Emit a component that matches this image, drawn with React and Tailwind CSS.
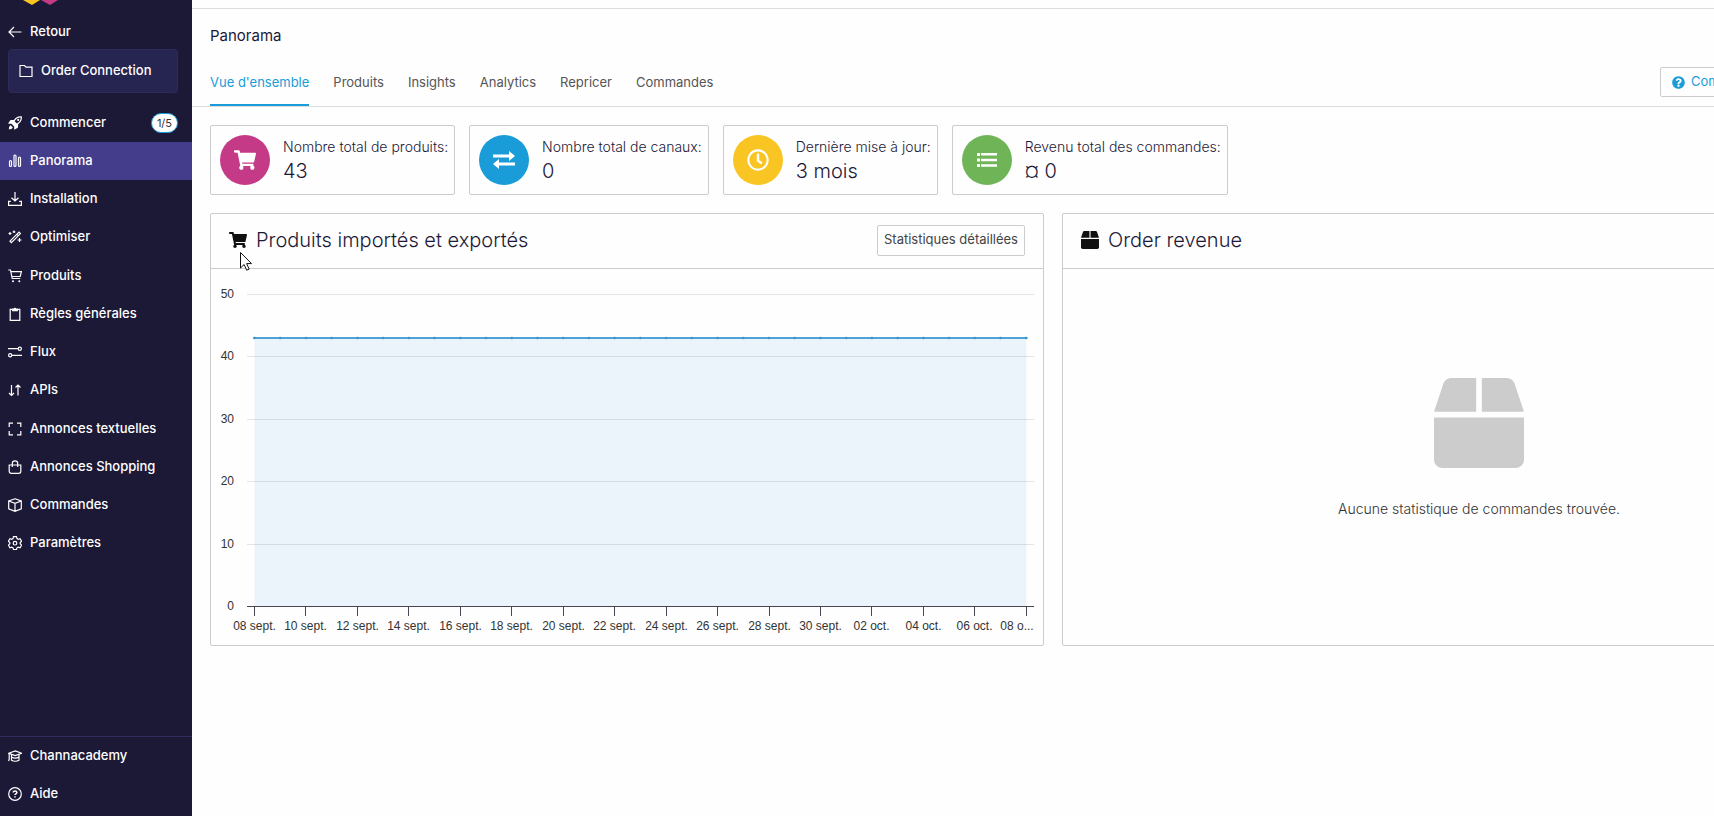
import React from "react";
import { FaBox, FaShoppingCart, FaRegClock, FaQuestionCircle } from "react-icons/fa";

const icons = {
  back: <path d="M13.5 7H1M6 2 1 7l5 5" />,
  folder: <path d="M1 1.500h4.500l1.500 1.700h6v9.300H1z" />,
  rocket: (
    <g fill="currentColor" stroke="none">
      <path
        fillRule="evenodd"
        d="M13.8.3C10.700-.3 8 .7 5.900 3.900H3.200C2.700 3.900 2.300 4.100 2 4.600L.1 7.800h3.300L6.200 10.600v3.200l3.200-1.900c.5-.3.7-.7.700-1.200V8.200c3.200-2.200 4.200-4.900 3.700-7.900zM12.700 1.400c.1 2.300-1 4.500-3.800 6.200L6.600 5.200C8.200 2.300 10.400 1.300 12.700 1.400z"
      />
      <circle cx="10.200" cy="3.900" r="1.100" />
      <path d="M2.600 9.300c-1.200.5-1.700 2-1.700 3.900 1.800 0 3.400-.5 3.900-1.800z" />
    </g>
  ),
  chart: (
    <>
      <rect x="1.500" y="6.500" width="2" height="6" rx="1" />
      <rect x="6" y="1" width="2" height="11.500" rx="1" />
      <rect x="10.500" y="3" width="2" height="9.500" rx="1" />
    </>
  ),
  download: <path d="M7 0v9M3.500 5.700 7 9l3.500-3.300M2.800 9.300H.6v4h12.800v-4h-2.200" />,
  wand: (
    <>
      <path d="M2 11.200 11 2.200l1.400 1.400-9 9zM8.900 4.300l1.400 1.400" />
      <path d="M2 2v3M.5 3.500h3M6 .5v2.600M4.700 1.800h2.600M11.500 8v4M9.500 10h4" />
    </>
  ),
  cart: (
    <>
      <path d="M.3 1h2.200l1.700 8.500h8M2.900 2.700h10.500l-1.200 4.800H4" />
      <circle cx="5" cy="12.300" r="1" fill="currentColor" stroke="none" />
      <circle cx="11.300" cy="12.300" r="1" fill="currentColor" stroke="none" />
    </>
  ),
  clipboard: (
    <>
      <path d="M4.500 2.300H2.200v11h9.600v-11H9.500" />
      <path d="M4.700 3.600V2h1.400a1 1 0 0 1 1.800 0h1.400v1.600z" fill="currentColor" />
    </>
  ),
  flux: (
    <>
      <path d="M0 3.700h10M4 10.300h10" />
      <circle cx="11.800" cy="3.700" r="1.600" />
      <circle cx="2.200" cy="10.300" r="1.600" />
    </>
  ),
  sort: <path d="M3.500 2v10.500M1 10l2.500 2.500L6 10M10 12.500V2M7.500 4.500 10 2l2.500 2.500" />,
  expand: <path d="M1.200 5V1.200H5M9 1.200h3.800V5M12.800 9v3.800H9M5 12.800H1.200V9" />,
  bag: <path d="M1.200 5h11.600v6.300a2 2 0 0 1-2 2H3.200a2 2 0 0 1-2-2zM4.300 7V3.500a2.700 2.700 0 0 1 5.400 0V7" />,
  cube: <path d="M7 .8 13.300 3v7.800L7 13.300.7 10.800V3zM.7 3 7 5.400 13.300 3M7 5.400v7.900" />,
  gear: (
    <>
      <path d="M5.500.7h3l.5 1.900 1.200.7 1.900-.6 1.500 2.600L12.200 6.600v1.200l1.400 1.300-1.500 2.600-1.900-.6-1.200.7-.5 1.700h-3L5 11.800l-1.200-.7-1.900.6L.4 9.100l1.400-1.300V6.600L.4 5.300l1.500-2.600 1.900.6L5 2.600z" />
      <circle cx="7" cy="7.200" r="1.800" />
    </>
  ),
  academy: (
    <>
      <path d="M.7 4.300 7.300 2l6.200 2.300-6.200 2.300zM3.500 5.600v5.600c2 1.300 5.500 1.300 7.500 0V5.600M3.500 8c2 1.200 5.500 1.200 7.500 0" />
      <path d="M1.200 4.800v5.500L.5 12" />
    </>
  ),
  help: (
    <>
      <circle cx="7" cy="7" r="6.300" />
      <path d="M5.200 5.600c0-2.200 3.700-2.100 3.700 0 0 1.300-1.900 1.300-1.900 2.500M7 9.300v1.300" strokeWidth="1.500" />
    </>
  ),
};

function Icon({ name }) {
  return (
    <svg viewBox="0 0 14 14" className="size-[14px] shrink-0" fill="none" stroke="currentColor" strokeWidth="1.200">
      {icons[name]}
    </svg>
  );
}

const menu = [
  [
    { icon: "rocket", label: "Commencer", badge: "1/5" },
    { icon: "chart", label: "Panorama", active: true },
    { icon: "download", label: "Installation" },
    { icon: "wand", label: "Optimiser" },
  ],
  [
    { icon: "cart", label: "Produits" },
    { icon: "clipboard", label: "Règles générales" },
    { icon: "flux", label: "Flux" },
    { icon: "sort", label: "APIs" },
  ],
  [
    { icon: "expand", label: "Annonces textuelles" },
    { icon: "bag", label: "Annonces Shopping" },
    { icon: "cube", label: "Commandes" },
    { icon: "gear", label: "Paramètres" },
  ],
];

const footerMenu = [
  { icon: "academy", label: "Channacademy" },
  { icon: "help", label: "Aide" },
];

function MenuItem({ item }) {
  return (
    <li>
      <a
        href="#"
        className={`flex h-[38px] items-center gap-2 pr-[14px] pl-2 ${item.active ? "bg-[#433d8b]" : ""}`}
      >
        <Icon name={item.icon} />
        <span>{item.label}</span>
        {item.badge && (
          <span className="ml-auto flex h-5 items-center rounded-full border border-[#1a9cd8] bg-white px-[5px] text-[11px] font-normal text-[#333]">
            {item.badge}
          </span>
        )}
      </a>
    </li>
  );
}

function Sidebar() {
  return (
    <aside className="flex w-48 shrink-0 flex-col bg-[#1c1937] text-[13px] font-medium text-white">
      <svg viewBox="0 0 36 5" className="ml-[23px] h-[5px] w-9">
        <path d="M0 0h17L9 5z" fill="#f9c522" />
        <path d="M18 0h17l-8 5z" fill="#c43a86" />
      </svg>
      <a href="#" className="mt-2 flex h-[38px] items-center gap-2 pl-2">
        <Icon name="back" />
        Retour
      </a>
      <a
        href="#"
        className="mr-[14px] ml-2 -mt-0.5 flex h-11 items-center gap-2 rounded border border-[#2e2b5c] bg-[#262450] pl-[10px]"
      >
        <Icon name="folder" />
        Order Connection
      </a>
      <nav className="mt-[11px] flex flex-col gap-px">
        {menu.map((group, i) => (
          <ul key={i}>
            {group.map((item) => (
              <MenuItem key={item.label} item={item} />
            ))}
          </ul>
        ))}
      </nav>
      <ul className="mt-auto border-t border-[#2f2c60] pb-[3px]">
        {footerMenu.map((item) => (
          <MenuItem key={item.label} item={item} />
        ))}
      </ul>
    </aside>
  );
}

const tabs = ["Vue d'ensemble", "Produits", "Insights", "Analytics", "Repricer", "Commandes"];

function Header() {
  return (
    <header className="mt-2 border-y border-[#dcdcdc] pr-[10px] pl-[18px]">
      <h1 className="pt-4 text-[15px] leading-[22px] text-[#1c1937]">Panorama</h1>
      <div className="flex items-start pt-3">
        <nav className="flex gap-6">
          {tabs.map((t, i) => (
            <a
              key={t}
              href="#"
              className={`h-[47px] border-b-2 pt-[13px] text-[13px] leading-5 ${
                i === 0 ? "border-[#1a9cd8] text-[#1a9cd8]" : "border-transparent text-[#555]"
              }`}
            >
              {t}
            </a>
          ))}
        </nav>
        <button className="mt-2 ml-auto flex h-[30px] w-[236px] items-center gap-[6px] rounded-xs border border-[#ccc] pl-[11px] text-[13px] whitespace-nowrap text-[#1a9cd8]">
          <FaQuestionCircle className="size-[13px]" />
          Comment ça marche ?
        </button>
      </div>
    </header>
  );
}

function ExchangeIcon() {
  return (
    <svg viewBox="0 0 24 20" className="h-5 w-6" fill="currentColor">
      <path d="M1 4.500h16V1l6 5-6 5V7.500H1zM23 12.500H7V9l-6 5 6 5v-3.500h16z" />
    </svg>
  );
}

function ListIcon() {
  return (
    <svg viewBox="0 0 20 14" className="h-[14px] w-5" fill="currentColor">
      <path d="M0 0h3v3H0zM4 0h16v2.500H4zM0 5.500h3v3H0zM4 5.700h16v2.500H4zM0 11h3v3H0zM4 11.300h16v2.500H4z" />
    </svg>
  );
}

const stats = [
  { label: "Nombre total de produits:", value: "43", color: "bg-[#c43a86]", icon: <FaShoppingCart className="size-[22px]" /> },
  { label: "Nombre total de canaux:", value: "0", color: "bg-[#1a9cd8]", icon: <ExchangeIcon /> },
  { label: "Dernière mise à jour:", value: "3 mois", color: "bg-[#f9c522]", icon: <FaRegClock className="size-[22px]" /> },
  { label: "Revenu total des commandes:", value: "¤ 0", color: "bg-[#6fb558]", icon: <ListIcon /> },
];

function StatCard({ stat }) {
  return (
    <div className="flex h-[70px] items-center gap-[13px] rounded-xs border border-[#ccc] pr-[6px] pl-[9px]">
      <div className={`flex size-[50px] shrink-0 items-center justify-center rounded-full text-white ${stat.color}`}>
        {stat.icon}
      </div>
      <div className="pt-0.5 text-[#1c1937]">
        <div className="text-sm leading-5 font-light">{stat.label}</div>
        <div className="text-xl leading-7 font-light">{stat.value}</div>
      </div>
    </div>
  );
}

const yTicks = [50, 40, 30, 20, 10, 0];
const xLabels = [
  "08 sept.", "10 sept.", "12 sept.", "14 sept.", "16 sept.", "18 sept.", "20 sept.", "22 sept.",
  "24 sept.", "26 sept.", "28 sept.", "30 sept.", "02 oct.", "04 oct.", "06 oct.", "08 o...",
];

const X0 = 43.5;
const STEP = 51.45;
const yPos = (v) => 337.5 - v * 6.24;

function ProductChart() {
  const right = X0 + STEP * 15;
  const points = Array.from({ length: 31 }, (_, i) => X0 + (i * STEP) / 2);

  return (
    <svg viewBox="0 0 832 376" className="block w-full font-['Liberation_Sans',sans-serif] text-xs">
      <rect x={X0} y={yPos(43)} width={right - X0} height={yPos(0) - yPos(43)} fill="#ebf3fb" />
      {yTicks.map((v) => (
        <g key={v}>
          <line
            x1="36"
            x2="823"
            y1={Math.floor(yPos(v)) + 0.5}
            y2={Math.floor(yPos(v)) + 0.5}
            stroke={v === 0 ? "#4b4654" : "#000"}
            strokeOpacity={v === 0 ? 1 : 0.1}
          />
          <text x="23" y={Math.floor(yPos(v)) + 4} textAnchor="end" fill="#333">
            {v}
          </text>
        </g>
      ))}
      <line x1={X0 - 1} x2={right + 1} y1="69" y2="69" stroke="#4da3d8" strokeWidth="2" />
      {points.map((x) => (
        <circle key={x} cx={x} cy="69" r="1.300" fill="#3c93cc" />
      ))}
      {xLabels.map((label, i) => {
        const x = Math.round(X0 + i * STEP - 0.5) + 0.5;
        return (
          <g key={label}>
            <line x1={x} x2={x} y1="338" y2="347" stroke="#4b4654" />
            <text x={i === 15 ? 806 : x} y="361" textAnchor="middle" fill="#333">
              {label}
            </text>
          </g>
        );
      })}
    </svg>
  );
}

function Panel({ icon, title, action, children }) {
  return (
    <section className="flex flex-1 flex-col rounded-xs border border-[#ccc]">
      <div className="flex h-[55px] items-center gap-[9px] border-b border-[#ccc] px-[18px] pb-0.5">
        {icon}
        <h2 className="text-xl font-light text-[#1c1937]">{title}</h2>
        {action}
      </div>
      {children}
    </section>
  );
}

// mouse pointer resting on the products panel
function Pointer() {
  return (
    <svg viewBox="0 0 12 19" className="absolute top-[39px] left-[30px] h-[19px] w-3">
      <path d="M.5.500v15.500l3.600-3.500 2.600 5.700 2.500-1.100-2.600-5.500h4.900z" fill="#fff" stroke="#111" />
    </svg>
  );
}

export default function App() {
  return (
    <div className="flex min-h-screen overflow-hidden bg-[#fefefe] font-[Inter,sans-serif]">
      <Sidebar />
      <main className="min-w-full">
        <Header />
        <div className="flex flex-col gap-[18px] pt-[18px] pr-[10px] pl-[18px]">
          <div className="flex gap-[14px]">
            {stats.map((s) => (
              <StatCard key={s.label} stat={s} />
            ))}
          </div>
          <div className="relative flex gap-[18px]">
            <Panel
              icon={<FaShoppingCart className="size-[18px] text-[#111]" />}
              title="Produits importés et exportés"
              action={
                <button className="ml-auto h-[31px] rounded-xs border border-[#ccc] px-[6px] text-[13px] text-[#444]">
                  Statistiques détaillées
                </button>
              }
            >
              <ProductChart />
            </Panel>
            <Panel icon={<FaBox className="size-[18px] text-[#111]" />} title="Order revenue">
              <div className="flex flex-1 flex-col items-center justify-center gap-[31px] pb-[18px]">
                <FaBox className="size-[90px] text-[#ccc]" />
                <p className="text-sm font-light text-[#333]">Aucune statistique de commandes trouvée.</p>
              </div>
            </Panel>
            <Pointer />
          </div>
        </div>
      </main>
    </div>
  );
}
